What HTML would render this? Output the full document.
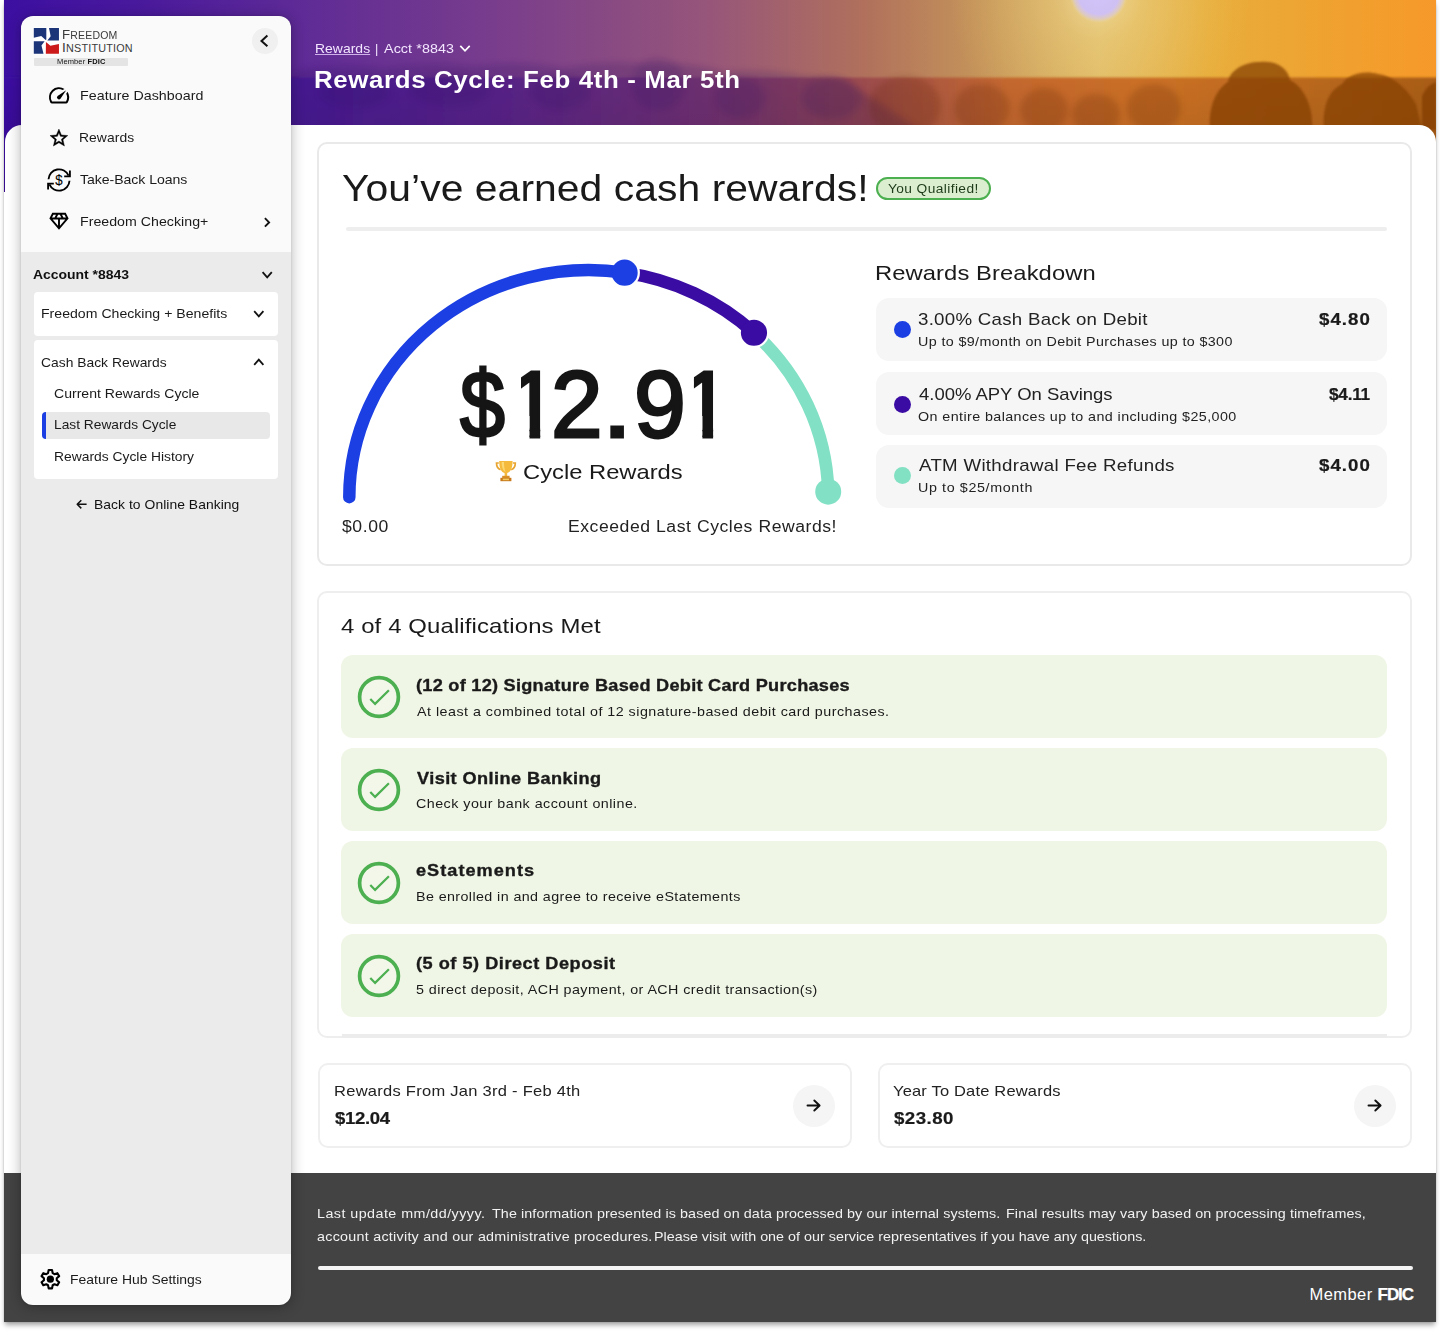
<!DOCTYPE html>
<html lang="en">
<head>
<meta charset="utf-8">
<title>Rewards Cycle: Feb 4th - Mar 5th</title>
<style>
*{box-sizing:border-box;margin:0;padding:0}
html,body{width:1440px;height:1331px;background:#fff;overflow:hidden}
body{font-family:"Liberation Sans",sans-serif;position:relative}
.a{position:absolute}
.t{position:absolute;white-space:nowrap;transform-origin:0 50%;font-family:"Liberation Sans",sans-serif}
.frame{left:4px;top:0;width:1432px;height:1322px;background:#fff;box-shadow:0 4px 5px -1px rgba(0,0,0,.36),0 0 1.5px rgba(0,0,0,.18);overflow:hidden}
.hero{left:0;top:0;width:1432px;height:192px;overflow:hidden}
.panel{left:1px;top:125px;width:1431px;height:1060px;background:#fff;border-radius:17px 17px 0 0}
.footer{left:0;top:1173px;width:1432px;height:149px;background:#434343}
.side{left:21px;top:16px;width:269.5px;height:1288.6px;border-radius:12px;background:#fafafa;box-shadow:0 2px 14px rgba(0,0,0,.3),0 0 2px rgba(0,0,0,.14);overflow:hidden}
.card{border:2px solid #e9e9e9;border-radius:10px;background:#fff}
.bk{background:#f6f6f6;border-radius:13px;left:876px;width:511px;height:63px}
.ql{background:#eff6e5;border-radius:12px;left:341px;width:1046px;height:83px}
svg{position:absolute;overflow:visible}
</style>
</head>
<body>
<div class="a frame">
  <div class="a hero"><!--HERO--><svg width="1432" height="192" viewBox="0 0 1432 192" style="left:0;top:0">
<defs>
<linearGradient id="hsky" x1="0" x2="1" y1="0" y2="0">
<stop offset="0" stop-color="#3c0fa1"/><stop offset=".1" stop-color="#4a1a9c"/><stop offset=".21" stop-color="#5f2b96"/><stop offset=".35" stop-color="#7a3e8c"/><stop offset=".49" stop-color="#96557a"/><stop offset=".6" stop-color="#b0705c"/><stop offset=".68" stop-color="#c4935a"/><stop offset=".765" stop-color="#dfba66"/><stop offset=".84" stop-color="#e8ae3c"/><stop offset=".92" stop-color="#efa230"/><stop offset="1" stop-color="#f6992a"/>
</linearGradient>
<linearGradient id="hgnd" x1="0" x2="1" y1="0" y2="0">
<stop offset="0" stop-color="#3b0ea2"/><stop offset=".21" stop-color="#4d1d9c"/><stop offset=".35" stop-color="#632890"/><stop offset=".49" stop-color="#7e3874"/><stop offset=".6" stop-color="#9c4c4e"/><stop offset=".7" stop-color="#c4682e"/><stop offset=".8" stop-color="#cb7026"/><stop offset=".9" stop-color="#bc6a1e"/><stop offset="1" stop-color="#a85c16"/>
</linearGradient>
<linearGradient id="hfade" x1="0" x2="0" y1="0" y2="1"><stop offset="0" stop-color="#000" stop-opacity="0"/><stop offset="1" stop-color="#200" stop-opacity=".14"/></linearGradient>
<radialGradient id="hglow" cx="1095" cy="-4" r="150" gradientUnits="userSpaceOnUse">
<stop offset="0" stop-color="#f4e4b0" stop-opacity=".75"/><stop offset=".3" stop-color="#efd688" stop-opacity=".4"/><stop offset="1" stop-color="#ecc868" stop-opacity="0"/>
</radialGradient>
<radialGradient id="hsun" cx="1094.6" cy="-6" r="29" gradientUnits="userSpaceOnUse">
<stop offset="0" stop-color="#d2c4f8"/><stop offset=".7" stop-color="#cfc0f4"/><stop offset=".86" stop-color="#d8c8dc" stop-opacity=".7"/><stop offset="1" stop-color="#e8d8b0" stop-opacity="0"/>
</radialGradient>
<filter id="hb1" x="-10%" y="-30%" width="120%" height="160%"><feGaussianBlur stdDeviation="1.3"/></filter>
<filter id="hb3" x="-10%" y="-30%" width="120%" height="160%"><feGaussianBlur stdDeviation="3"/></filter>
</defs>
<rect width="1432" height="192" fill="url(#hsky)"/>
<rect width="1432" height="192" fill="url(#hglow)"/>
<circle cx="1094.6" cy="-6" r="29" fill="url(#hsun)"/>
<g filter="url(#hb1)"><rect x="-5" y="77.5" width="1442" height="120" fill="url(#hgnd)"/></g>
<rect x="0" y="78" width="1432" height="114" fill="url(#hfade)"/>
<g filter="url(#hb3)" fill="#2a0a60" opacity=".2">
<path d="M286 192V72Q330 62 380 68Q430 60 470 66Q520 60 560 68Q600 60 640 64Q690 62 720 72Q760 68 800 76Q825 75 840 80L1010 192Z"/>
</g>
<g filter="url(#hb3)" fill="#2a0a60" opacity=".16">
<ellipse cx="654" cy="84" rx="27" ry="26"/><ellipse cx="736" cy="98" rx="25" ry="20"/><ellipse cx="828" cy="98" rx="30" ry="21"/><ellipse cx="556" cy="92" rx="30" ry="18"/><ellipse cx="446" cy="90" rx="40" ry="16"/><ellipse cx="350" cy="92" rx="36" ry="16"/>
</g>
<g filter="url(#hb3)" fill="#5a1c00" opacity=".2">
<ellipse cx="901" cy="106" rx="36" ry="30"/><ellipse cx="978" cy="108" rx="28" ry="24"/><ellipse cx="1040" cy="110" rx="24" ry="22"/><ellipse cx="1150" cy="108" rx="27" ry="24"/><ellipse cx="1092" cy="114" rx="24" ry="20"/>
</g>
<g filter="url(#hb1)" fill="#843e06">
<g opacity=".72"><path d="M1206 130C1204 104 1214 88 1224 82C1226 70 1240 62 1256 62C1272 60 1284 68 1286 80C1298 86 1310 104 1308 130Z"/></g>
<g opacity=".7"><path d="M1320 130C1318 104 1326 90 1338 84C1344 74 1360 70 1374 74C1390 76 1404 90 1412 104L1418 130Z"/></g>
<g opacity=".75"><path d="M1418 130V96Q1424 84 1432 82V130Z"/></g>
</g>
</svg><!--/HERO--></div>
  <div class="a panel"></div>
  <div class="a footer"></div>
</div>

<!-- cards -->
<div class="a card" style="left:316.5px;top:142px;width:1095px;height:423.5px"></div>
<div class="a" style="left:346px;top:227px;width:1041px;height:3.5px;border-radius:2px;background:#eee"></div>
<div class="a" style="left:875.5px;top:177px;width:115px;height:23px;border-radius:12px;background:#dbefd0;border:2px solid #4caf50"></div>
<div class="a bk" style="top:298px"></div>
<div class="a bk" style="top:372px"></div>
<div class="a bk" style="top:444.5px"></div>
<div class="a" style="left:893.5px;top:321px;width:17px;height:17px;border-radius:50%;background:#1b3fe3"></div>
<div class="a" style="left:893.5px;top:395.5px;width:17px;height:17px;border-radius:50%;background:#3a0ca3"></div>
<div class="a" style="left:893.5px;top:467px;width:17px;height:17px;border-radius:50%;background:#82e0c3"></div>
<!--GAUGE-->

<div class="a card" style="left:316.5px;top:591px;width:1095px;height:446.5px;border-color:#eee"></div>
<div class="a" style="left:342px;top:1034px;width:1045px;height:3.5px;background:#ececec"></div>
<div class="a ql" style="top:655px"></div>
<div class="a ql" style="top:748px"></div>
<div class="a ql" style="top:841px"></div>
<div class="a ql" style="top:934px"></div>
<!--CHECKS-->

<div class="a card" style="left:318px;top:1063px;width:533.5px;height:84.5px;border-radius:10px;border-color:#efefef"></div>
<div class="a card" style="left:877.5px;top:1063px;width:534px;height:84.5px;border-radius:10px;border-color:#efefef"></div>
<div class="a" style="left:792.5px;top:1084.5px;width:42px;height:42px;border-radius:50%;background:#f5f5f5"></div>
<div class="a" style="left:1353.5px;top:1084.5px;width:42px;height:42px;border-radius:50%;background:#f5f5f5"></div>
<!--ARROWS-->

<!-- footer bits -->
<div class="a" style="left:318px;top:1265.5px;width:1094.5px;height:4.5px;border-radius:3px;background:#f4f4f4"></div>

<!-- sidebar -->
<div class="a side">
  <div class="a" style="left:0;top:236px;width:270px;height:1002px;background:#ebebeb"></div>
  <div class="a" style="left:13px;top:276px;width:244px;height:44px;border-radius:4px;background:#fff"></div>
  <div class="a" style="left:13px;top:324px;width:244px;height:139px;border-radius:4px;background:#fff"></div>
  <div class="a" style="left:21px;top:396px;width:227.5px;height:27px;border-radius:4px;background:#e8e8e8;overflow:hidden"><div class="a" style="left:0;top:0;width:4px;height:27px;background:#1b3fe3"></div></div>
  <div class="a" style="left:231px;top:12px;width:25.8px;height:25.8px;border-radius:50%;background:#f0f0f0"></div>
  <div class="a" style="left:13px;top:42.3px;width:94px;height:7.4px;border-radius:1px;background:#e4e4e4"></div>
</div>
<!--OVERLAY--><svg width="1440" height="1331" viewBox="0 0 1440 1331" style="left:0;top:0;pointer-events:none">
<g fill="none" stroke-width="12.5">
<path d="M753.96 332.74A239.5 227.1 0 0 1 828.23 491.65" stroke="#82e1c4"/>
<circle cx="753.96" cy="332.74" r="15.3" fill="#fff" stroke="none"/>
<path d="M624.61 272.65A239.5 227.1 0 0 1 753.96 332.74" stroke="#3a0ca3"/>
<circle cx="624.61" cy="272.65" r="15.3" fill="#fff" stroke="none"/>
<path d="M349.30 497.20A239.5 227.1 0 0 1 624.61 272.65" stroke="#1b3fe3" stroke-linecap="round"/>
</g>
<circle cx="828.23" cy="491.65" r="13" fill="#82e1c4"/>
<circle cx="753.96" cy="332.74" r="13.1" fill="#3a0ca3"/>
<circle cx="624.61" cy="272.65" r="13.1" fill="#1b3fe3"/>
<circle cx="379" cy="697" r="19.4" fill="rgba(255,255,255,.18)" stroke="#4caf50" stroke-width="3.7"/><path d="M370.3 698.9L375.1 703.9L388.9 690.3" fill="none" stroke="#4caf50" stroke-width="2.2"/>
<circle cx="379" cy="790" r="19.4" fill="rgba(255,255,255,.18)" stroke="#4caf50" stroke-width="3.7"/><path d="M370.3 791.9L375.1 796.9L388.9 783.3" fill="none" stroke="#4caf50" stroke-width="2.2"/>
<circle cx="379" cy="883" r="19.4" fill="rgba(255,255,255,.18)" stroke="#4caf50" stroke-width="3.7"/><path d="M370.3 884.9L375.1 889.9L388.9 876.3" fill="none" stroke="#4caf50" stroke-width="2.2"/>
<circle cx="379" cy="976" r="19.4" fill="rgba(255,255,255,.18)" stroke="#4caf50" stroke-width="3.7"/><path d="M370.3 977.9L375.1 982.9L388.9 969.3" fill="none" stroke="#4caf50" stroke-width="2.2"/>
<path d="M807.5 1105.5H819.5M814.3000000000001 1100.5L819.6 1105.5L814.3000000000001 1110.5" fill="none" stroke="#111" stroke-width="1.9" stroke-linecap="round" stroke-linejoin="round"/><path d="M1368.5 1105.5H1380.5M1375.3 1100.5L1380.6000000000001 1105.5L1375.3 1110.5" fill="none" stroke="#111" stroke-width="1.9" stroke-linecap="round" stroke-linejoin="round"/>
<path d="M262.59999999999997 272.2L267.2 277.40000000000003L271.8 272.2" fill="none" stroke="#111" stroke-width="1.8"/>
<path d="M254.20000000000002 311.2L258.8 316.40000000000003L263.40000000000003 311.2" fill="none" stroke="#111" stroke-width="1.8"/>
<path d="M254.20000000000002 364.8L258.8 359.59999999999997L263.40000000000003 364.8" fill="none" stroke="#111" stroke-width="1.8"/>
<path d="M460.3 45.8L465 50.8L469.7 45.8" fill="none" stroke="#fff" stroke-width="1.7"/>
<path d="M264.9 218.2L269.1 222.4L264.9 226.6" fill="none" stroke="#111" stroke-width="1.9"/>
<path d="M267.4 35.6L261.5 40.9L267.4 46.3" fill="none" stroke="#111" stroke-width="2"/>
<path d="M86.6 504.3H77.3M81.3 500.2L77.2 504.3L81.3 508.4" fill="none" stroke="#111" stroke-width="1.5" stroke-linejoin="round"/>
<path d="M52.68 1273.13L52.04 1270.06L48.66 1270.06L48.02 1273.13L46.26 1274.15L43.28 1273.16L41.58 1276.10L43.93 1278.18L43.93 1280.22L41.58 1282.30L43.28 1285.24L46.26 1284.25L48.02 1285.27L48.66 1288.34L52.04 1288.34L52.68 1285.27L54.44 1284.25L57.42 1285.24L59.12 1282.30L56.77 1280.22L56.77 1278.18L59.12 1276.10L57.42 1273.16L54.44 1274.15Z" fill="none" stroke="#000" stroke-width="2.1" stroke-linejoin="round"/><circle cx="50.35" cy="1279.2" r="3.6" fill="#000"/>
<g transform="translate(46.9,83.2) scale(1.01)"><path fill="#000" d="M20.38 8.57l-1.23 1.85a8 8 0 0 1-.22 7.58H5.07A8 8 0 0 1 15.58 6.85l1.85-1.23A10 10 0 0 0 3.35 19a2 2 0 0 0 1.72 1h13.85a2 2 0 0 0 1.74-1 10 10 0 0 0-.27-10.44zm-9.79 6.84a2 2 0 0 0 2.83 0l5.66-8.49-8.49 5.66a2 2 0 0 0 0 2.83z"/></g>
<g transform="translate(48.2,127.3) scale(0.8925)"><path fill="#000" stroke="#000" stroke-width=".45" d="M22 9.24l-7.19-.62L12 2 9.19 8.63 2 9.24l5.46 4.73L5.82 21 12 17.27 18.18 21l-1.63-7.03L22 9.24zM12 15.4l-3.76 2.27 1-4.28-3.32-2.88 4.38-.38L12 6.1l1.71 4.04 4.38.38-3.32 2.88 1 4.28L12 15.4z"/></g>
<g fill="none" stroke="#000" stroke-width="1.85" stroke-linejoin="miter"><path d="M48.5 179.3A10.5 10.5 0 0 1 68.6 175.6"/><path d="M69.9 170.4V176.4H64.2"/><path d="M69.5 180.7A10.5 10.5 0 0 1 49.4 184.4"/><path d="M48.1 189.6V183.6H53.8"/></g><text x="59" y="185.35" font-family="Liberation Sans, sans-serif" font-size="15.4" text-anchor="middle" fill="#000" stroke="#000" stroke-width=".1" transform="translate(59 0) scale(.86 1) translate(-59 0)">$</text>
<g transform="translate(47.45,210.0) scale(0.962,0.945)"><path fill="#000" d="M19 3H5L2 9l10 12L22 9l-3-6zM9.62 8l1.5-3h1.76l1.5 3H9.62zM11 10v6.68L5.44 10H11zm2 0h5.56L13 16.68V10zm6.26-2h-2.65l-1.5-3h2.65l1.5 3zM6.24 5h2.650l-1.5 3H4.74l1.5-3z"/></g>
<g transform="translate(33.8,28.1)"><rect x="-0.6" y="-0.6" width="26.4" height="26.9" fill="#fff"/><path d="M0 0L12.52 0L12.52 11.49L11.88 11.88L7.41 7.97L0 9.66Z" fill="#1c3478"/><path d="M15.2 0L25.16 0L25.16 12.52L13.54 12.52L16.86 8.17Z" fill="#1c3478"/><path d="M0 13.08L10.78 13.08L7.66 17.37L9.71 25.67L0 25.67Z" fill="#1c3478"/><path d="M12.13 13.79L16.6 17.68L25.16 15.84L25.16 25.67L12.01 25.67Z" fill="#cc1a1a"/></g>
<g transform="translate(495.6,460.4)"><path d="M3.2 2.6H0.9C0.9 6.2 2.2 8.4 5 9.3M17.4 2.6H19.7C19.7 6.2 18.4 8.4 15.6 9.3" fill="none" stroke="#e8a531" stroke-width="1.7"/><path d="M3.6 0.6H17C17 7.2 15.3 11.6 11.6 12.6V15.6H9V12.6C5.3 11.6 3.6 7.2 3.6 0.6Z" fill="#f5b93b"/><path d="M6 1.5H8.4C8.4 6 9 9.4 10.2 11.6C7.4 10.4 6 6.6 6 1.5Z" fill="#fbd873"/><path d="M6.6 15.4H14V17.6H6.6Z" fill="#d98f25"/><path d="M4.8 17.4H15.8V20.8H4.8Z" fill="#c77a1c"/><rect x="7.2" y="18.2" width="6.2" height="1.6" fill="#f5c95a"/></g>
</svg><!--/OVERLAY-->

<div id="bignum"><span class="t big" id="big0" style="left:460.20px;top:350.97px;font-size:94.4px;line-height:108.47px;color:#151515;-webkit-text-stroke:2.8px #151515;transform:scaleX(0.8568);">$</span><span class="t big" id="big1" style="left:506.90px;top:350.97px;font-size:94.4px;line-height:108.47px;color:#151515;-webkit-text-stroke:2.8px #151515;clip-path:polygon(14.10px 0,33.30px 0,33.30px 100%,22.64px 100%,22.64px 60%,14.10px 60%);">1</span><span class="t big" id="big2" style="left:551.40px;top:350.97px;font-size:94.4px;line-height:108.47px;color:#151515;-webkit-text-stroke:2.8px #151515;transform:scaleX(0.9827);">2</span><span class="t big" id="big3" style="left:602.20px;top:350.97px;font-size:94.4px;line-height:108.47px;color:#151515;-webkit-text-stroke:2.8px #151515;transform:scaleX(1.1542);">.</span><span class="t big" id="big4" style="left:633.60px;top:350.97px;font-size:94.4px;line-height:108.47px;color:#151515;-webkit-text-stroke:2.8px #151515;transform:scaleX(0.9870);">9</span><span class="t big" id="big5" style="left:679.80px;top:350.97px;font-size:94.4px;line-height:108.47px;color:#151515;-webkit-text-stroke:2.8px #151515;clip-path:polygon(14.15px 0,33.30px 0,33.30px 100%,22.64px 100%,22.64px 60%,14.15px 60%);">1</span></div>
<div class="t" id="n1" style="left:79.76px;top:88.53px;font-size:13px;line-height:14.937px;font-weight:400;color:#1a1a1a;letter-spacing:0.045px;transform:scaleX(1.0945);">Feature Dashboard</div>
<div class="t" id="n2" style="left:78.81px;top:130.54px;font-size:13px;line-height:14.937px;font-weight:400;color:#1a1a1a;letter-spacing:0.063px;transform:scaleX(1.0663);">Rewards</div>
<div class="t" id="n3" style="left:80.20px;top:172.54px;font-size:13px;line-height:14.937px;font-weight:400;color:#1a1a1a;letter-spacing:-0.040px;transform:scaleX(1.0829);">Take-Back Loans</div>
<div class="t" id="n4" style="left:79.77px;top:214.54px;font-size:13px;line-height:14.937px;font-weight:400;color:#1a1a1a;letter-spacing:0.029px;transform:scaleX(1.0884);">Freedom Checking+</div>
<div class="t" id="acct" style="left:33.22px;top:267.74px;font-size:13px;line-height:14.937px;font-weight:700;color:#111;letter-spacing:-0.029px;transform:scaleX(1.0749);">Account *8843</div>
<div class="t" id="fcb" style="left:40.60px;top:306.74px;font-size:13px;line-height:14.937px;font-weight:400;color:#1a1a1a;letter-spacing:0.018px;transform:scaleX(1.0826);">Freedom Checking + Benefits</div>
<div class="t" id="cbr" style="left:40.61px;top:355.74px;font-size:13px;line-height:14.937px;font-weight:400;color:#1a1a1a;letter-spacing:0.019px;transform:scaleX(1.0638);">Cash Back Rewards</div>
<div class="t" id="s1" style="left:53.61px;top:386.54px;font-size:13px;line-height:14.937px;font-weight:400;color:#1a1a1a;letter-spacing:0.019px;transform:scaleX(1.0791);">Current Rewards Cycle</div>
<div class="t" id="s2" style="left:53.61px;top:418.04px;font-size:13px;line-height:14.937px;font-weight:400;color:#1a1a1a;letter-spacing:0.000px;transform:scaleX(1.0579);">Last Rewards Cycle</div>
<div class="t" id="s3" style="left:53.61px;top:449.74px;font-size:13px;line-height:14.937px;font-weight:400;color:#1a1a1a;letter-spacing:0.000px;transform:scaleX(1.0648);">Rewards Cycle History</div>
<div class="t" id="back" style="left:93.61px;top:497.74px;font-size:13px;line-height:14.937px;font-weight:400;color:#111;letter-spacing:0.045px;transform:scaleX(1.0678);">Back to Online Banking</div>
<div class="t" id="fhs" style="left:70.41px;top:1272.53px;font-size:13px;line-height:14.937px;font-weight:400;color:#1a1a1a;letter-spacing:0.009px;transform:scaleX(1.0711);">Feature Hub Settings</div>
<div class="t" id="lg1" style="left:61.79px;top:27.29px;font-size:13.6px;line-height:15.626px;font-weight:400;color:#3a3a3a;letter-spacing:0.171px;transform:scaleX(0.9759);">F<span style="font-size:10.8px">REEDOM</span></div>
<div class="t" id="lg2" style="left:62.01px;top:39.99px;font-size:13.6px;line-height:15.626px;font-weight:400;color:#3a3a3a;letter-spacing:0.201px;transform:scaleX(1.0000);">I<span style="font-size:10.8px">NSTITUTION</span></div>
<div class="t" id="lg3" style="left:56.97px;top:57.62px;font-size:7.6px;line-height:8.732px;font-weight:400;color:#111;letter-spacing:0.139px;transform:scaleX(0.9868);">Member <b>FDIC</b></div>
<div class="t" id="bc1" style="left:314.61px;top:41.93px;font-size:13px;line-height:14.937px;font-weight:400;color:#f3e6ff;letter-spacing:0.031px;transform:scaleX(1.0702);text-decoration:underline;text-decoration-thickness:1px;text-underline-offset:1.2px;text-decoration-color:rgba(235,210,255,.8);">Rewards</div>
<div class="t" id="bc2" style="left:374.61px;top:41.93px;font-size:13px;line-height:14.937px;font-weight:400;color:#f3e6ff;letter-spacing:0.000px;transform:scaleX(0.9733);">|</div>
<div class="t" id="bc3" style="left:384.05px;top:41.93px;font-size:13px;line-height:14.937px;font-weight:400;color:#f3e6ff;letter-spacing:0.085px;transform:scaleX(1.1000);">Acct *8843</div>
<div class="t" id="title" style="left:314.30px;top:67.33px;font-size:23.5px;line-height:27.002px;font-weight:700;color:#fff;letter-spacing:0.569px;transform:scaleX(1.1000);">Rewards Cycle: Feb 4th - Mar 5th</div>
<div class="t" id="h1" style="left:341.54px;top:168.27px;font-size:36.5px;line-height:41.938px;font-weight:400;color:#1a1a1a;letter-spacing:0.041px;transform:scaleX(1.1194);">You’ve earned cash rewards!</div>
<div class="t" id="badge" style="left:887.62px;top:181.59px;font-size:12.5px;line-height:14.363px;font-weight:400;color:#1c3a18;letter-spacing:0.359px;transform:scaleX(1.1000);">You Qualified!</div>
<div class="t" id="cyc" style="left:522.58px;top:460.30px;font-size:21px;line-height:24.129px;font-weight:400;color:#1a1a1a;letter-spacing:0.000px;transform:scaleX(1.1309);">Cycle Rewards</div>
<div class="t" id="z0" style="left:342.08px;top:518.02px;font-size:16px;line-height:18.384px;font-weight:400;color:#222;letter-spacing:0.525px;transform:scaleX(1.1000);">$0.00</div>
<div class="t" id="exc" style="left:567.50px;top:518.02px;font-size:16px;line-height:18.384px;font-weight:400;color:#222;letter-spacing:0.492px;transform:scaleX(1.1000);">Exceeded Last Cycles Rewards!</div>
<div class="t" id="rb" style="left:875.17px;top:261.30px;font-size:21px;line-height:24.129px;font-weight:400;color:#1a1a1a;letter-spacing:0.072px;transform:scaleX(1.1323);">Rewards Breakdown</div>
<div class="t" id="b1t" style="left:918.49px;top:309.92px;font-size:17px;line-height:19.533px;font-weight:400;color:#222;letter-spacing:0.234px;transform:scaleX(1.1000);">3.00% Cash Back on Debit</div>
<div class="t" id="b1v" style="left:1319.31px;top:309.92px;font-size:17px;line-height:19.533px;font-weight:700;color:#1a1a1a;letter-spacing:0.925px;transform:scaleX(1.1000);-webkit-text-stroke:.2px #1a1a1a;">$4.80</div>
<div class="t" id="b1s" style="left:918.41px;top:335.04px;font-size:13px;line-height:14.937px;font-weight:400;color:#222;letter-spacing:0.344px;transform:scaleX(1.1000);">Up to $9/month on Debit Purchases up to $300</div>
<div class="t" id="b2t" style="left:918.52px;top:384.52px;font-size:17px;line-height:19.533px;font-weight:400;color:#222;letter-spacing:-0.018px;transform:scaleX(1.0880);">4.00% APY On Savings</div>
<div class="t" id="b2v" style="left:1328.62px;top:384.52px;font-size:17px;line-height:19.533px;font-weight:700;color:#1a1a1a;letter-spacing:-0.247px;transform:scaleX(1.0142);-webkit-text-stroke:.2px #1a1a1a;">$4.11</div>
<div class="t" id="b2s" style="left:918.41px;top:410.14px;font-size:13px;line-height:14.937px;font-weight:400;color:#222;letter-spacing:0.375px;transform:scaleX(1.1000);">On entire balances up to and including $25,000</div>
<div class="t" id="b3t" style="left:919.13px;top:456.12px;font-size:17px;line-height:19.533px;font-weight:400;color:#222;letter-spacing:0.269px;transform:scaleX(1.1000);">ATM Withdrawal Fee Refunds</div>
<div class="t" id="b3v" style="left:1319.31px;top:456.12px;font-size:17px;line-height:19.533px;font-weight:700;color:#1a1a1a;letter-spacing:0.925px;transform:scaleX(1.1000);-webkit-text-stroke:.2px #1a1a1a;">$4.00</div>
<div class="t" id="b3s" style="left:918.41px;top:481.24px;font-size:13px;line-height:14.937px;font-weight:400;color:#222;letter-spacing:0.562px;transform:scaleX(1.1000);">Up to $25/month</div>
<div class="t" id="q0" style="left:340.97px;top:613.89px;font-size:21px;line-height:24.129px;font-weight:400;color:#1a1a1a;letter-spacing:0.100px;transform:scaleX(1.1400);">4 of 4 Qualifications Met</div>
<div class="t" id="q1t" style="left:415.50px;top:675.87px;font-size:16.5px;line-height:18.959px;font-weight:700;color:#1a1a1a;letter-spacing:0.238px;transform:scaleX(1.1000);-webkit-text-stroke:.35px #1a1a1a;">(12 of 12) Signature Based Debit Card Purchases</div>
<div class="t" id="q1d" style="left:417.25px;top:704.53px;font-size:13px;line-height:14.937px;font-weight:400;color:#1a1a1a;letter-spacing:0.434px;transform:scaleX(1.1000);">At least a combined total of 12 signature-based debit card purchases.</div>
<div class="t" id="q2t" style="left:417.34px;top:768.67px;font-size:16.5px;line-height:18.959px;font-weight:700;color:#1a1a1a;letter-spacing:0.376px;transform:scaleX(1.1000);-webkit-text-stroke:.35px #1a1a1a;">Visit Online Banking</div>
<div class="t" id="q2d" style="left:415.61px;top:797.33px;font-size:13px;line-height:14.937px;font-weight:400;color:#1a1a1a;letter-spacing:0.419px;transform:scaleX(1.1000);">Check your bank account online.</div>
<div class="t" id="q3t" style="left:416.28px;top:861.37px;font-size:16.5px;line-height:18.959px;font-weight:700;color:#1a1a1a;letter-spacing:0.924px;transform:scaleX(1.1000);-webkit-text-stroke:.35px #1a1a1a;">eStatements</div>
<div class="t" id="q3d" style="left:415.52px;top:890.03px;font-size:13px;line-height:14.937px;font-weight:400;color:#1a1a1a;letter-spacing:0.361px;transform:scaleX(1.1000);">Be enrolled in and agree to receive eStatements</div>
<div class="t" id="q4t" style="left:415.50px;top:954.07px;font-size:16.5px;line-height:18.959px;font-weight:700;color:#1a1a1a;letter-spacing:0.474px;transform:scaleX(1.1000);-webkit-text-stroke:.35px #1a1a1a;">(5 of 5) Direct Deposit</div>
<div class="t" id="q4d" style="left:415.61px;top:982.74px;font-size:13px;line-height:14.937px;font-weight:400;color:#1a1a1a;letter-spacing:0.385px;transform:scaleX(1.1000);">5 direct deposit, ACH payment, or ACH credit transaction(s)</div>
<div class="t" id="c1t" style="left:333.82px;top:1082.02px;font-size:15px;line-height:17.235px;font-weight:400;color:#222;letter-spacing:0.246px;transform:scaleX(1.1000);">Rewards From Jan 3rd - Feb 4th</div>
<div class="t" id="c1v" style="left:334.51px;top:1108.62px;font-size:17px;line-height:19.533px;font-weight:700;color:#1a1a1a;letter-spacing:-0.287px;transform:scaleX(1.0904);-webkit-text-stroke:.2px #1a1a1a;">$12.04</div>
<div class="t" id="c2t" style="left:892.55px;top:1082.02px;font-size:15px;line-height:17.235px;font-weight:400;color:#222;letter-spacing:0.158px;transform:scaleX(1.1000);">Year To Date Rewards</div>
<div class="t" id="c2v" style="left:893.51px;top:1108.62px;font-size:17px;line-height:19.533px;font-weight:700;color:#1a1a1a;letter-spacing:0.413px;transform:scaleX(1.1000);-webkit-text-stroke:.2px #1a1a1a;">$23.80</div>
<div class="t" id="f1a" style="left:316.53px;top:1206.53px;font-size:13px;line-height:14.937px;font-weight:400;color:#f2f2f2;letter-spacing:0.414px;transform:scaleX(1.1000);">Last update mm/dd/yyyy.&nbsp; </div>
<div class="t" id="f1b" style="left:491.98px;top:1206.53px;font-size:13px;line-height:14.937px;font-weight:400;color:#f2f2f2;letter-spacing:0.090px;transform:scaleX(1.1000);">The information presented is based on data processed by our internal systems.&nbsp; </div>
<div class="t" id="f1c" style="left:1005.53px;top:1206.53px;font-size:13px;line-height:14.937px;font-weight:400;color:#f2f2f2;letter-spacing:0.104px;transform:scaleX(1.1000);">Final results may vary based on processing timeframes,</div>
<div class="t" id="f2a" style="left:316.61px;top:1229.93px;font-size:13px;line-height:14.937px;font-weight:400;color:#f2f2f2;letter-spacing:0.243px;transform:scaleX(1.1000);">account activity and our administrative procedures. </div>
<div class="t" id="f2b" style="left:653.53px;top:1229.93px;font-size:13px;line-height:14.937px;font-weight:400;color:#f2f2f2;letter-spacing:0.022px;transform:scaleX(1.1000);">Please visit with one of our service representatives if you have any questions.</div>
<div class="t" id="mf" style="left:1309.51px;top:1285.17px;font-size:16.5px;line-height:18.959px;font-weight:400;color:#fff;letter-spacing:0.428px;transform:scaleX(1.0000);">Member <b style="font-size:17px;letter-spacing:-1.1px;-webkit-text-stroke:.25px #fff">FDIC</b></div>
</body>
</html>
